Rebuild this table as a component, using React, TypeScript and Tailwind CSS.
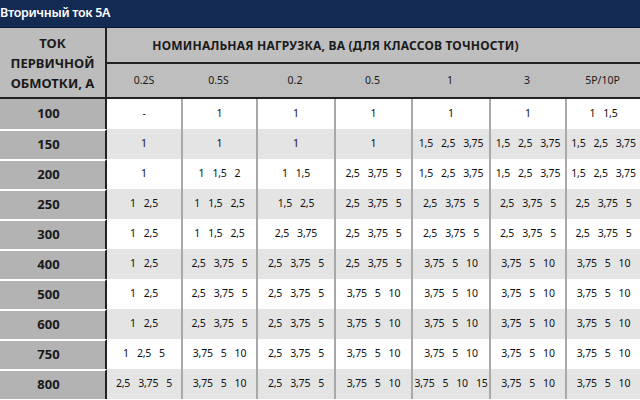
const classes = ['0.2S', '0.5S', '0.2', '0.5', '1', '3', '5P/10P']

const A = '2,5 3,75 5'
const B = '3,75 5 10'
const C = '1,5 2,5 3,75'

const rows: { current: string; values: string[] }[] = [
  { current: '100', values: ['-', '1', '1', '1', '1', '1', '1 1,5'] },
  { current: '150', values: ['1', '1', '1', '1', C, C, C] },
  { current: '200', values: ['1', '1 1,5 2', '1 1,5', A, C, C, C] },
  { current: '250', values: ['1 2,5', '1 1,5 2,5', '1,5 2,5', A, A, A, A] },
  { current: '300', values: ['1 2,5', '1 1,5 2,5', '2,5 3,75', A, A, A, A] },
  { current: '400', values: ['1 2,5', A, A, A, B, B, B] },
  { current: '500', values: ['1 2,5', A, A, B, B, B, B] },
  { current: '600', values: ['1 2,5', A, A, B, B, B, B] },
  { current: '750', values: ['1 2,5 5', B, A, B, B, B, B] },
  { current: '800', values: [A, B, A, B, '3,75 5 10 15', B, B] },
]

const cols = 'grid grid-cols-[74px_75px_78px_77px_78px_76px_75px]'

function Cell({ text, first }: { text: string; first: boolean }) {
  return (
    <div
      className={
        'flex items-center justify-center gap-[8px] text-[10.5px] tracking-[-0.2px] text-[#111] whitespace-nowrap ' +
        (first ? '' : 'border-l-2 border-[#a9a9a9]')
      }
    >
      {text.split(' ').map((v, i) => (
        <span key={i}>{v}</span>
      ))}
    </div>
  )
}

export default function App() {
  return (
    <div className="w-[640px] h-[400px] overflow-hidden bg-white font-['Noto_Sans',sans-serif]">
      <div className="h-[28px] bg-[#132a53] border-b border-[#0a1733] flex items-center text-[12.5px] font-semibold tracking-[-0.3px] text-white">
        Вторичный ток 5А
      </div>

      {/* header */}
      <div className="flex border-b-2 border-[#222]">
        <div className="w-[107px] h-[69px] shrink-0 border-r-2 border-[#222] bg-[#bcbcbc] flex items-center justify-center pt-[1px] text-center text-[13px] font-bold leading-[20px] text-[#1a1a1a]">
          ТОК
          <br />
          ПЕРВИЧНОЙ
          <br />
          ОБМОТКИ, А
        </div>
        <div className="flex-1 flex flex-col bg-[#bebebe]">
          <div className="h-[36px] border-b-2 border-[#222] flex items-center justify-center pt-[2px] pr-[76px] text-[12px] font-bold tracking-[0.2px] text-[#1a1a1a]">
            НОМИНАЛЬНАЯ НАГРУЗКА, ВА (ДЛЯ КЛАССОВ ТОЧНОСТИ)
          </div>
          <div className={cols + ' flex-1'}>
            {classes.map((c) => (
              <div key={c} className="flex items-center justify-center text-[10.5px] text-[#1a1a1a]">
                {c}
              </div>
            ))}
          </div>
        </div>
      </div>

      {/* body */}
      {rows.map((r, i) => (
        <div key={r.current} className={'flex h-[30px] ' + (i % 2 ? 'bg-[#e4e4e4]' : 'bg-white')}>
          <div
            className={
              'w-[107px] shrink-0 border-r-2 border-[#222] bg-[#b3b3b3] flex items-center justify-center pr-[8px] text-[13px] font-bold text-[#1a1a1a] ' +
              (i === 0 ? '' : 'border-t-2 border-t-white')
            }
          >
            {r.current}
          </div>
          <div className={cols + ' flex-1'}>
            {r.values.map((v, j) => (
              <Cell key={j} text={v} first={j === 0} />
            ))}
          </div>
        </div>
      ))}
    </div>
  )
}
